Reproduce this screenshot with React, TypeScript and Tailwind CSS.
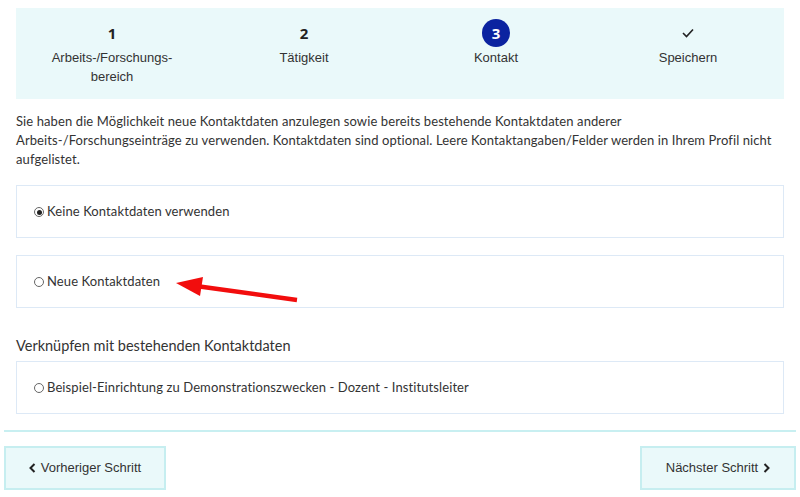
import React from "react";

type Step = {
  num: string;
  label: React.ReactNode;
  active?: boolean;
  done?: boolean;
};

const steps: Step[] = [
  { num: "1", label: <>Arbeits-/Forschungs-<br />bereich</> },
  { num: "2", label: "Tätigkeit" },
  { num: "3", label: "Kontakt", active: true },
  { num: "", label: "Speichern", done: true },
];

/**
 * Radio option card, the dot is drawn by hand so it matches the small native look
 */
function OptionCard({ label, checked }: { label: string; checked?: boolean }) {
  return (
    <label className="flex h-[53px] items-center border border-[#dde9f6] pl-[17px] pt-[1px] text-[13px] tracking-[0.1px] text-[#333]">
      <span className="mr-[3px] flex h-[10px] w-[10px] items-center justify-center rounded-full border border-[#666] bg-white">
        {checked && <span className="h-[5px] w-[5px] rounded-full bg-[#222]" />}
      </span>
      {label}
    </label>
  );
}

export default function App() {
  return (
    <div className="relative h-[497px] w-[800px] overflow-hidden bg-white">
      <div className="px-4 pt-2" style={{ fontFamily: "Lato, 'Open Sans', sans-serif" }}>
        {/* Stepper */}
        <div className="grid h-[91px] grid-cols-4 bg-[#eaf9fa] pt-[13px]" style={{ fontFamily: "'Liberation Sans', Arial, sans-serif" }}>
          {steps.map((step, i) => (
            <div key={i} className="flex flex-col items-center">
              <div className="flex h-[24px] items-center justify-center">
                {step.active ? (
                  <span className="flex h-[28px] w-[28px] items-center justify-center rounded-full bg-[#0b23a0] text-[15px] font-bold text-white" style={{ fontFamily: "'Open Sans', sans-serif" }}>
                    {step.num}
                  </span>
                ) : step.done ? (
                  <svg width="12" height="10" viewBox="0 0 12 10" fill="none" stroke="#222" strokeWidth="1.6">
                    <polyline points="1,5 4.5,8.5 11,1.5" />
                  </svg>
                ) : (
                  <span className="text-[15px] font-bold text-[#222]" style={{ fontFamily: "'Open Sans', sans-serif" }}>
                    {step.num}
                  </span>
                )}
              </div>
              <div className="mt-[3px] text-center text-[13px] leading-[19px] text-[#333]">{step.label}</div>
            </div>
          ))}
        </div>

        <p className="mt-[13px] whitespace-nowrap text-[13px] leading-[19px] tracking-[0.1px] text-[#333]">
          Sie haben die Möglichkeit neue Kontaktdaten anzulegen sowie bereits bestehende Kontaktdaten anderer
          <br />
          Arbeits-/Forschungseinträge zu verwenden. Kontaktdaten sind optional. Leere Kontaktangaben/Felder werden in Ihrem Profil nicht
          <br />
          aufgelistet.
        </p>

        <div className="mt-[16px] flex flex-col gap-[17px]">
          <OptionCard label="Keine Kontaktdaten verwenden" checked />
          <OptionCard label="Neue Kontaktdaten" />
        </div>

        <h3 className="mt-[28px] text-[14.5px] leading-[20px] text-[#333]">Verknüpfen mit bestehenden Kontaktdaten</h3>
        <div className="mt-[5px]">
          <OptionCard label="Beispiel-Einrichtung zu Demonstrationszwecken - Dozent - Institutsleiter" />
        </div>
      </div>

      {/* Footer navigation */}
      <div className="px-1 pt-[16px]" style={{ fontFamily: "'Liberation Sans', Arial, sans-serif" }}>
        <div className="h-[2px] bg-[#c8eff1]" />
        <div className="mt-[14px] flex justify-between">
          <button className="flex h-[44px] w-[162px] items-center justify-center gap-[5px] border-2 border-[#c6eef0] bg-[#eaf9fa] text-[13px] text-[#333]">
            <svg width="7" height="10" viewBox="0 0 7 10" fill="none" stroke="#222" strokeWidth="2">
              <polyline points="5.5,1 1.5,5 5.5,9" />
            </svg>
            Vorheriger Schritt
          </button>
          <button className="flex h-[44px] w-[156px] items-center justify-center gap-[5px] border-2 border-[#c6eef0] bg-[#eaf9fa] text-[13px] text-[#333]">
            Nächster Schritt
            <svg width="7" height="10" viewBox="0 0 7 10" fill="none" stroke="#222" strokeWidth="2">
              <polyline points="1.5,1 5.5,5 1.5,9" />
            </svg>
          </button>
        </div>
      </div>

      {/* Red annotation arrow */}
      <svg className="pointer-events-none absolute left-0 top-0" width="800" height="497">
        <line x1="297" y1="300" x2="196" y2="286" stroke="#f20d0d" strokeWidth="4.5" />
        <polygon points="176,283 203,277 200,296" fill="#f20d0d" />
      </svg>
    </div>
  );
}
